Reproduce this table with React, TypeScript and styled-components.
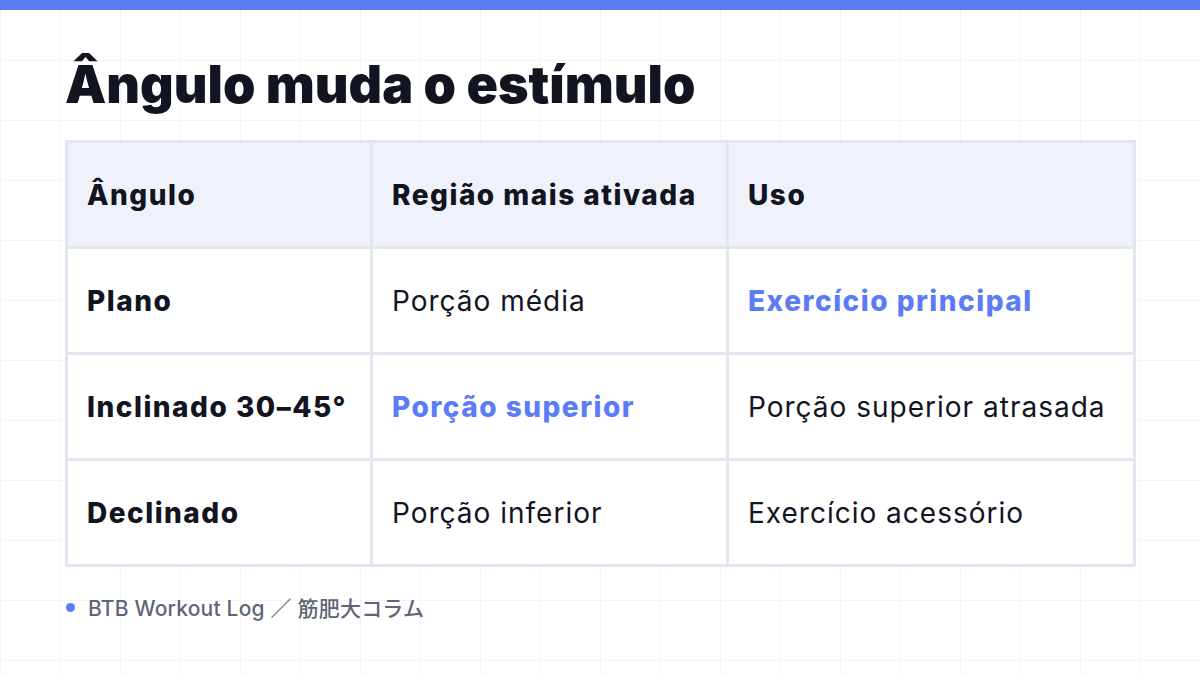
import React from "react";
import styled, { createGlobalStyle } from "styled-components";

const GlobalStyle = createGlobalStyle`
  html, body {
    margin: 0;
    padding: 0;
  }
  body {
    width: 1200px;
    height: 675px;
    overflow: hidden;
    font-family: Inter, "Noto Sans", "Noto Sans CJK JP", sans-serif;
    color: #12141f;
    background-color: #ffffff;
    background-image:
      linear-gradient(to right, #f3f4f8 1px, transparent 1px),
      linear-gradient(to bottom, #f3f4f8 1px, transparent 1px);
    background-size: 60px 60px;
    background-position: 0 0;
  }
`;

const TopBar = styled.div`
  height: 10px;
  background: #5b7cf5;
`;

const Slide = styled.main`
  padding: 0 65px;
`;

const Title = styled.h1`
  margin: 0;
  padding-top: 44px;
  height: 86px;
  font-size: 52px;
  line-height: 62px;
  font-weight: 900;
  letter-spacing: 0;
  color: #12141f;
`;

const Table = styled.table`
  width: 1068px;
  border-collapse: collapse;
  table-layout: fixed;
  background: #ffffff;
`;

const Cell = styled.td<{ $accent?: boolean; $strong?: boolean }>`
  height: 103px;
  padding: 0 0 0 19px;
  border: 3px solid #e3e6f0;
  font-size: 28px;
  font-weight: ${(p) => (p.$strong || p.$accent ? 800 : 400)};
  letter-spacing: ${(p) => (p.$strong || p.$accent ? "1.5px" : "1px")};
  color: ${(p) => (p.$accent ? "#5b7cf5" : "#12141f")};
  white-space: nowrap;
  vertical-align: middle;
`;

const HeadCell = styled(Cell).attrs({ as: "th" })`
  background: #f0f2fb;
  text-align: left;
  font-weight: 800;
  letter-spacing: 1.5px;
`;

const Footer = styled.footer`
  display: flex;
  align-items: center;
  gap: 13px;
  margin-top: 25px;
  padding-left: 1px;
  font-size: 21px;
  font-weight: 500;
  letter-spacing: 0.2px;
  color: #5e6577;
`;

const Dot = styled.span`
  width: 9px;
  height: 9px;
  border-radius: 50%;
  background: #5b7cf5;
`;

type Row = {
  angle: string;
  region: string;
  use: string;
  accent?: "region" | "use";
};

const rows: Row[] = [
  { angle: "Plano", region: "Porção média", use: "Exercício principal", accent: "use" },
  { angle: "Inclinado 30–45°", region: "Porção superior", use: "Porção superior atrasada", accent: "region" },
  { angle: "Declinado", region: "Porção inferior", use: "Exercício acessório" },
];

export default function App() {
  return (
    <>
      <GlobalStyle />
      <TopBar />
      <Slide>
        <Title>Ângulo muda o estímulo</Title>
        <Table>
          <colgroup>
            <col style={{ width: 305 }} />
            <col style={{ width: 356 }} />
            <col style={{ width: 407 }} />
          </colgroup>
          <thead>
            <tr>
              <HeadCell>Ângulo</HeadCell>
              <HeadCell>Região mais ativada</HeadCell>
              <HeadCell>Uso</HeadCell>
            </tr>
          </thead>
          <tbody>
            {rows.map((r) => (
              <tr key={r.angle}>
                <Cell $strong>{r.angle}</Cell>
                <Cell $accent={r.accent === "region"}>{r.region}</Cell>
                <Cell $accent={r.accent === "use"}>{r.use}</Cell>
              </tr>
            ))}
          </tbody>
        </Table>
        <Footer>
          <Dot />
          BTB Workout Log ／ 筋肥大コラム
        </Footer>
      </Slide>
    </>
  );
}
